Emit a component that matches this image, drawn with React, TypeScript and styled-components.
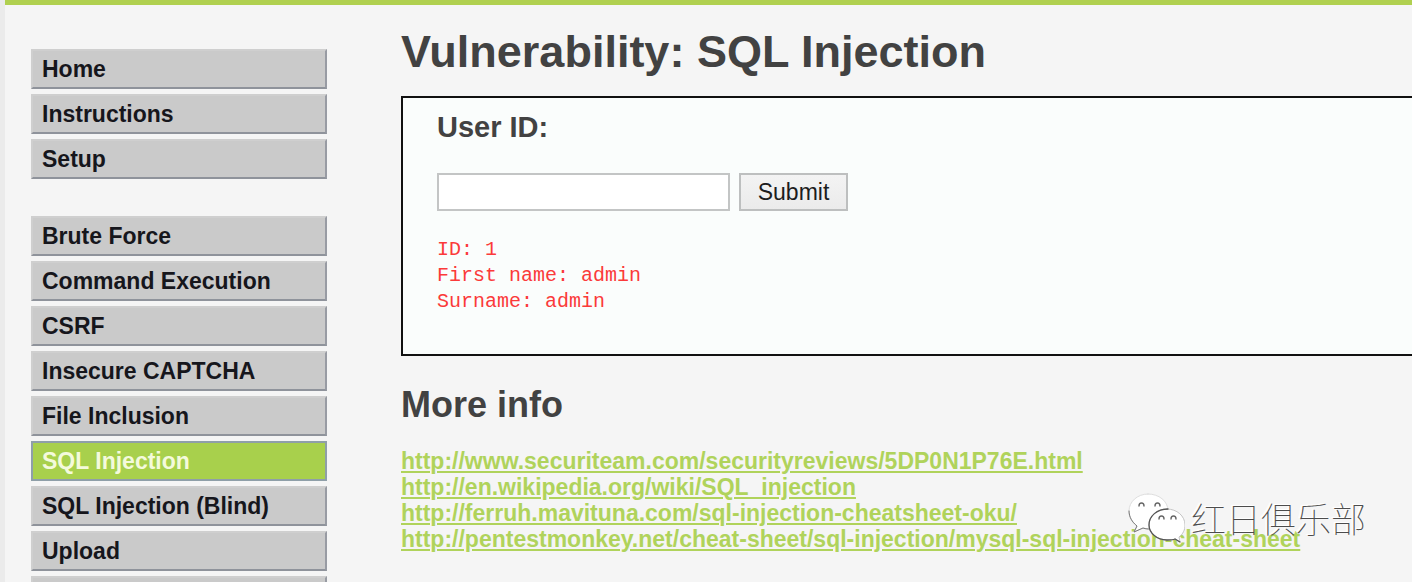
import React from "react";
import styled, { createGlobalStyle } from "styled-components";

const GlobalStyle = createGlobalStyle`
  * { box-sizing: border-box; }
  html, body { margin: 0; background: #f5f5f5; }
  body {
    font-family: "Liberation Sans", Arial, sans-serif;
    color: #424242;
    overflow: hidden;
  }
`;

const Page = styled.div`
  display: flex;
  align-items: flex-start;
  height: 100vh;
  overflow: hidden;
  border-left: 5px solid #ebebeb;
`;

const Frame = styled.div`
  flex: 1;
  min-width: 0;
  display: flex;
  border-top: 5px solid #b0d050;
`;

const Sidebar = styled.nav`
  flex: none;
  width: 322px;
  padding: 44px 0 0 26px;
`;

const Menu = styled.ul`
  display: flex;
  flex-direction: column;
  gap: 5px;
  margin: 0 0 37px;
  padding: 0;
  list-style: none;
`;

const MenuLink = styled.a<{ $active?: boolean }>`
  display: block;
  height: 40px;
  padding: 0 9px;
  border: 2px solid;
  border-color: ${(p) => (p.$active ? "#8f9fa8" : "#cfcfcf #989ba3 #8f939b #cfcfcf")};
  background: ${(p) => (p.$active ? "#a8d04c" : "#cacaca")};
  color: ${(p) => (p.$active ? "#f4fadc" : "#16161c")};
  font-size: 23px;
  font-weight: bold;
  line-height: 36px;
  text-decoration: none;
  white-space: nowrap;
`;

const Main = styled.main`
  flex: 1;
  min-width: 0;
  padding: 20px 0 0 74px;
`;

const Title = styled.h1`
  margin: 0;
  font-size: 45px;
  line-height: 54px;
`;

const Panel = styled.section`
  margin: 17px 0 0;
  padding: 11px 34px 39px;
  border: 2px solid #111;
  border-right: 0;
  background: #fafdfc;
`;

const FieldLabel = styled.label`
  display: block;
  font-size: 29px;
  font-weight: bold;
  line-height: 36px;
`;

const FormRow = styled.div`
  display: flex;
  gap: 9px;
  margin: 28px 0 26px;
`;

const TextInput = styled.input`
  width: 293px;
  height: 38px;
  padding: 0 6px;
  border: 2px solid #c3c5c5;
  background: #fff;
  font: 23px "Liberation Sans", Arial, sans-serif;
`;

const SubmitButton = styled.button`
  width: 109px;
  height: 38px;
  padding: 0;
  border: 2px solid #bdbfbf;
  background: linear-gradient(#f3f3f3, #ebebeb);
  color: #1c1c1c;
  font: 23px "Liberation Sans", Arial, sans-serif;
`;

const Result = styled.pre`
  margin: 0;
  color: #fb3a3a;
  font: 20px/26px "Liberation Mono", "Courier New", monospace;
`;

const SubTitle = styled.h2`
  margin: 28px 0 22px;
  font-size: 36px;
  line-height: 42px;
`;

const LinkList = styled.ul`
  margin: 0;
  padding: 0;
  list-style: none;
  font-size: 23px;
  font-weight: bold;
  line-height: 26px;
  white-space: nowrap;

  a { color: #b0d35b; }
`;

const Watermark = styled.div`
  position: absolute;
  right: 46px;
  bottom: 39px;
  display: flex;
  align-items: center;
  gap: 6px;
  color: #4c4c4c;
  font: 100 35px/50px "Noto Sans CJK SC", sans-serif;
  text-shadow: -1px -1px 0 #fff, -2px -1px 1px #fff;
`;

const firstMenu = ["Home", "Instructions", "Setup"];
const secondMenu = [
  "Brute Force",
  "Command Execution",
  "CSRF",
  "Insecure CAPTCHA",
  "File Inclusion",
  "SQL Injection",
  "SQL Injection (Blind)",
  "Upload",
  "",
];
const links = [
  "http://www.securiteam.com/securityreviews/5DP0N1P76E.html",
  "http://en.wikipedia.org/wiki/SQL_injection",
  "http://ferruh.mavituna.com/sql-injection-cheatsheet-oku/",
  "http://pentestmonkey.net/cheat-sheet/sql-injection/mysql-sql-injection-cheat-sheet",
];

function MenuGroup({ items }: { items: string[] }) {
  return (
    <Menu>
      {items.map((item) => (
        <li key={item}>
          <MenuLink href="#" $active={item === "SQL Injection"}>{item}</MenuLink>
        </li>
      ))}
    </Menu>
  );
}

function ChatLogo() {
  return (
    <svg width="58" height="50" viewBox="0 0 58 50" fill="none" strokeLinecap="round" aria-hidden="true">
      <path d="M21 1C10 1 2 9 2 18c0 6 3 11 8 15l-3 6 9-4c14 4 25-5 25-17C41 8 32 1 21 1Z" fill="#fff" stroke="#dedede" />
      <path d="M2 18c0 6 3 11 8 15l-3 6 9-4c3 1 5 1 7 1" stroke="#777" />
      <path d="M12 13c0-4 5-4 5 0M28 13c0-4 5-4 5 0" stroke="#666" strokeWidth="1.4" />
      <path d="M40 16c-10 0-18 7-18 16 0 8 8 15 18 15 3 0 6 0 8-1l5 3-1-5c4-3 6-7 6-12 0-9-8-16-18-16Z" fill="#fff" stroke="#c4c4c4" />
      <path d="M41 16c-11 0-19 7-19 16 0 8 8 15 18 15 3 0 6 0 8-1l5 3" stroke="#555" strokeWidth="1.3" />
      <path d="M32 26c0-4 5-4 5 0M44 26c0-4 5-4 5 0" stroke="#666" strokeWidth="1.4" />
    </svg>
  );
}

export default function App() {
  return (
    <>
      <GlobalStyle />
      <Page>
        <Frame>
          <Sidebar>
            <MenuGroup items={firstMenu} />
            <MenuGroup items={secondMenu} />
          </Sidebar>
          <Main>
            <Title>Vulnerability: SQL Injection</Title>
            <Panel>
              <form onSubmit={(e) => e.preventDefault()}>
                <FieldLabel htmlFor="user-id">User ID:</FieldLabel>
                <FormRow>
                  <TextInput id="user-id" type="text" />
                  <SubmitButton type="submit">Submit</SubmitButton>
                </FormRow>
              </form>
              <Result>{"ID: 1\nFirst name: admin\nSurname: admin"}</Result>
            </Panel>
            <SubTitle>More info</SubTitle>
            <LinkList>
              {links.map((url) => (
                <li key={url}><a href={url}>{url}</a></li>
              ))}
            </LinkList>
          </Main>
        </Frame>
      </Page>
      <Watermark>
        <ChatLogo />
        <span>红日俱乐部</span>
      </Watermark>
    </>
  );
}
